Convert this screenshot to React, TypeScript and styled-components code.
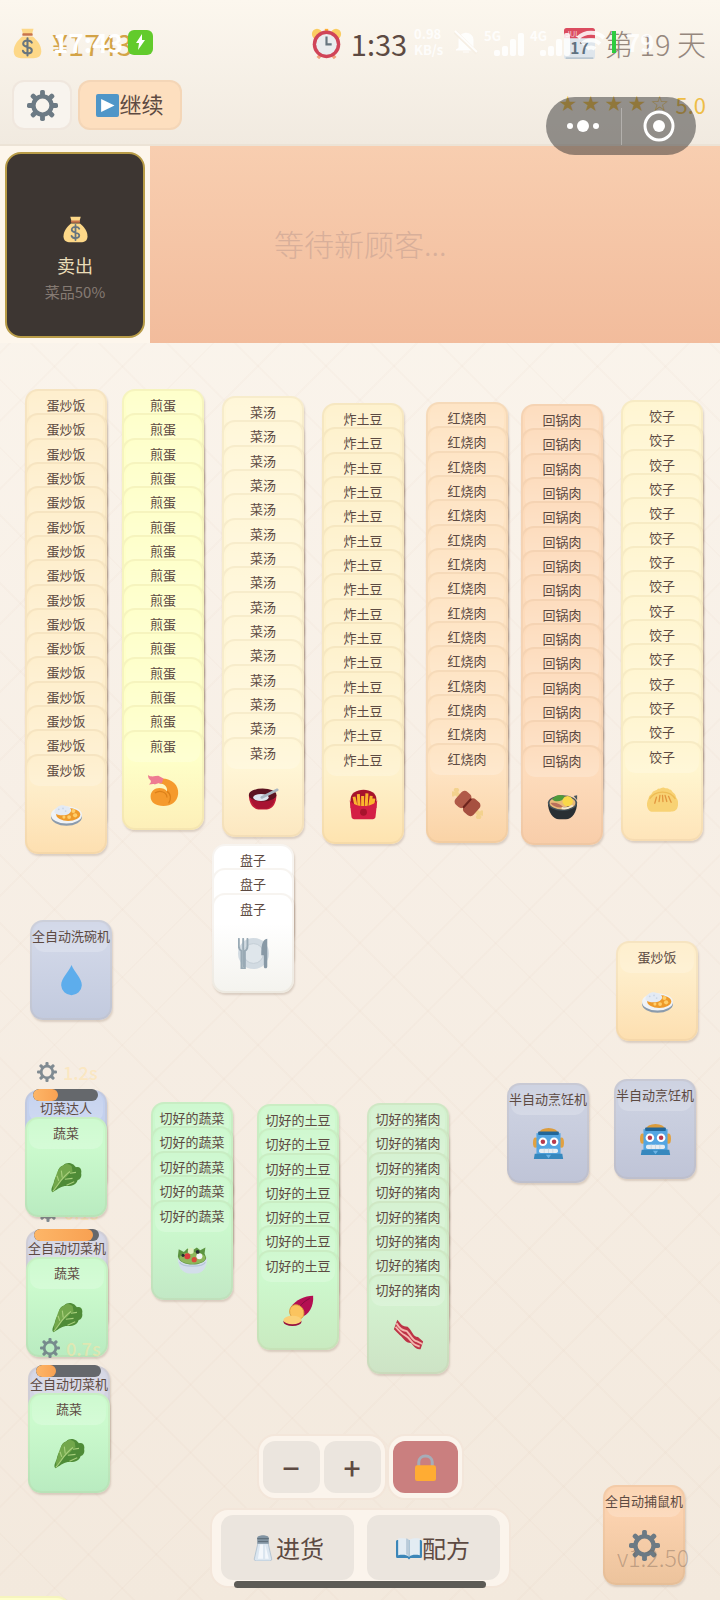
import React from "react";
import styled, { createGlobalStyle } from "styled-components";

const GlobalStyle = createGlobalStyle`
  * { box-sizing: border-box; }
  body {
    margin: 0;
    color: #5d4a42;
    background: #f7efe5;
    font-family: "Noto Sans CJK SC", "Noto Sans", sans-serif;
  }
  button { font-family: inherit; color: inherit; padding: 0; cursor: pointer; }
  ul { list-style: none; margin: 0; padding: 0; }
  svg { display: block; flex: none; }
`;

/* ---------- icons ---------- */

type IconName =
  | "bag" | "clock" | "calendar" | "gear" | "play" | "curry" | "shrimp" | "bowl"
  | "fries" | "meat" | "pan" | "dumpling" | "plate" | "drop" | "leaf" | "salad"
  | "potato" | "bacon" | "robot" | "lock" | "salt" | "book";

const teeth = [0, 45, 90, 135, 180, 225, 270, 315];

const drawings: Record<IconName, React.ReactNode> = {
  bag: (
    <>
      <path d="M11 1h14l-2 7H13z" fill="#fdd888" />
      <path d="M12 10C7 14 2 20 2 27c0 6 4 8 9 8h14c5 0 9-2 9-8 0-7-5-13-10-17z" fill="#fdd888" />
      <rect x="12" y="6" width="12" height="3" rx="1" fill="#c8744a" />
      <path d="M23 17c-1-2-3-2.500-5-2.500-3 0-5 1.500-5 3.800 0 5 10 2.500 10 7.400 0 2.300-2 3.800-5 3.800-2.500 0-4.500-.8-5.300-3M18 12v20" fill="none" stroke="#67757f" strokeWidth="2.400" strokeLinecap="round" />
    </>
  ),
  clock: (
    <>
      <circle cx="7" cy="7" r="6" fill="#fbcd62" />
      <circle cx="29" cy="7" r="6" fill="#fbcd62" />
      <path d="M8 35l4-5M28 35l-4-5" stroke="#f3a27c" strokeWidth="4" />
      <rect x="16" y="1" width="4" height="6" fill="#ffac33" />
      <circle cx="18" cy="19" r="16" fill="#d04458" />
      <circle cx="18" cy="19" r="12" fill="#eaecee" />
      <path d="M18 10v9h6" fill="none" stroke="#67757f" strokeWidth="2.500" />
    </>
  ),
  calendar: (
    <>
      <rect x="0" y="4" width="36" height="32" rx="3" fill="#dfe6ec" />
      <path d="M0 12V3a3 3 0 013-3h30a3 3 0 013 3v9z" fill="#db4c5f" />
      <path d="M2 35h32" stroke="#b9c6d0" strokeWidth="2" />
      <text x="18" y="30" fontSize="18" fontWeight="700" textAnchor="middle" fill="#5f7280">17</text>
      <text x="10" y="10" fontSize="9" textAnchor="middle" fill="#ffffff">JUL</text>
    </>
  ),
  gear: (
    <g fill="#6c7a84">
      {teeth.map((a) => (
        <rect key={a} x="15.200" y="0" width="5.600" height="9" rx="2" transform={`rotate(${a} 18 18)`} />
      ))}
      <path fillRule="evenodd" d="M18 5a13 13 0 100 26 13 13 0 000-26zm0 5a8 8 0 110 16 8 8 0 010-16z" />
    </g>
  ),
  play: (
    <>
      <rect width="36" height="36" rx="3" fill="#4f96c8" />
      <path d="M8 8l21 10L8 28z" fill="#fff" />
    </>
  ),
  curry: (
    <>
      <ellipse cx="18" cy="21" rx="18" ry="10" fill="#8b9bac" />
      <ellipse cx="18" cy="18.500" rx="18" ry="10" fill="#f0f3f6" />
      <ellipse cx="20" cy="18" rx="14" ry="7.500" fill="#ee9a2b" />
      <path d="M4 16C4 9 12 6 17 8c6 1 8 5 5 8-3 4-14 4-18 0z" fill="#e3eaf4" />
      <g fill="#ffce6b"><circle cx="26" cy="14" r="2.300" /><circle cx="28" cy="19" r="2.500" /><circle cx="21" cy="21" r="2.200" /><circle cx="15" cy="21" r="1.800" /></g>
      <g fill="#c8d4e4"><circle cx="9" cy="12" r="1" /><circle cx="14" cy="11" r="1" /><circle cx="17" cy="14" r="1" /></g>
    </>
  ),
  shrimp: (
    <>
      <path d="M16 4c12 0 20 8 19 18-1 9-8 14-17 14S3 32 3 25c0-6 5-10 10-10 4 0 7 1 9 4 1-5-3-9-9-9z" fill="#f59a2d" />
      <path d="M0 0c4 3 8 1 12 1l6 3-2 6c-3-1-6 0-8 1-2-1-4 0-7 0 2-2 3-3 2-5-2-1-3-3-3-6z" fill="#ee7b92" />
      <path d="M8 21c6-4 14-1 14 5M22 19c5 3 5 9 2 14" fill="none" stroke="#dc8019" strokeWidth="1.400" />
    </>
  ),
  bowl: (
    <>
      <path d="M1 15c0 10 5 16 11 17h10c7-1 11-8 11-17z" fill="#c41e3a" />
      <path d="M3 20c2 6 5 9 9 11h10c5-2 8-6 9-11z" fill="#a81332" />
      <ellipse cx="17" cy="15" rx="16" ry="7.500" fill="#5c1320" />
      <ellipse cx="15" cy="18" rx="9" ry="4" fill="#dfe6ee" />
      <path d="M16 18l18-9" stroke="#a9b5c0" strokeWidth="3" strokeLinecap="round" />
    </>
  ),
  fries: (
    <>
      <path d="M3 12C3 5 10 1 18 1s15 4 15 11v10H3z" fill="#a7132c" />
      <path d="M7 9l3 14M12 6l1 17M17 8v14M22 5l-1 17M27 8l-2 14M30 11l-2 12" stroke="#fbb42f" strokeWidth="3.500" />
      <path d="M2 13c5 9 27 9 32 0l-2 19c0 2-2 3-3 3H7c-1 0-3-1-3-3z" fill="#d41f45" />
      <circle cx="18" cy="27" r="4" fill="#a7132c" />
    </>
  ),
  meat: (
    <g transform="rotate(42 18 18)">
      <rect x="-2" y="15.500" width="40" height="5" rx="2" fill="#f3d28e" />
      <g fill="#f3d28e"><circle cx="-2" cy="15" r="3" /><circle cx="-2" cy="21" r="3" /><circle cx="38" cy="15" r="3" /><circle cx="38" cy="21" r="3" /></g>
      <rect x="4" y="8" width="14" height="20" rx="5" fill="#b05a48" />
      <rect x="17" y="8" width="15" height="20" rx="5" fill="#a65040" />
      <path d="M17.500 12v12" stroke="#6d241d" strokeWidth="2.500" strokeLinecap="round" />
    </g>
  ),
  pan: (
    <>
      <path d="M1 14c0 12 6 20 13 20h8c7 0 13-8 13-20z" fill="#292f33" />
      <ellipse cx="18" cy="15" rx="17" ry="9" fill="#46545c" />
      <ellipse cx="18" cy="15" rx="15" ry="7.500" fill="#e9ba79" />
      <path d="M6 11c4-7 13-6 15-3-3 5-10 7-15 3z" fill="#4e9a3b" />
      <circle cx="24" cy="13" r="6" fill="#f9d84a" />
      <path d="M4 15c7-1 11 1 15 5-7 1-12-1-15-5z" fill="#ba705c" />
      <path d="M31 7l4-1v6" fill="#46545c" />
      <path d="M17 21c5 1 10-1 13-3" stroke="#f6ead1" strokeWidth="2.400" />
    </>
  ),
  dumpling: (
    <>
      <path d="M2 14c0-3 3-4 4-6 1-3 5-2 7-5 3 1 4-2 7-1 2 1 4 0 6 2 3 0 3 3 5 4 3 2 2 5 4 7 2 4 1 9 0 11-2 4-6 3-9 4H9c-4 0-6 0-8-4-2-4-1-8 1-12z" fill="#f8d274" />
      <path d="M3 15c3-5 9-8 15-8s12 3 15 8" fill="none" stroke="#eebc55" strokeWidth="1.500" />
      <path d="M9 20l2-7M14 18l1-7M18.500 18l-.5-7M23 18l-2-7M28 19l-3-7" stroke="#e2963e" strokeWidth="1.500" strokeLinecap="round" />
    </>
  ),
  plate: (
    <>
      <circle cx="18" cy="18" r="18" fill="#d2dbe2" />
      <circle cx="18" cy="18" r="11.500" fill="#dfe6eb" stroke="#c0cbd3" />
      <path d="M1 1v9c0 3 1 4 3 5v20h4V15c2-1 3-2 3-5V1M6 1v12" fill="none" stroke="#99aab5" strokeWidth="2.200" strokeLinecap="round" />
      <path d="M5 14h2v20H5z" fill="#99aab5" />
      <path d="M34 1c-6 1-7 8-7 19h3v13c0 3 4 3 4 0z" fill="#8899a6" />
    </>
  ),
  drop: <path d="M18 0c3 8 12 15 12 23.500A12 12 0 0118 35 12 12 0 016 23.500C6 15 15 8 18 0z" fill="#5dadec" />,
  leaf: (
    <>
      <path d="M14 4c4-4 9-3 12-1l3 3c5-1 7 3 6 7 1 4-1 7-4 8-2 7-9 7-13 7-6 0-9 3-16 7-3-1-1-6 1-10 1-5 2-8 5-10-1-5 2-10 6-11z" fill="#4e8b37" />
      <path d="M14 4c4-3 8-2 10 1l1 6c-4 1-5 5-8 7-6 3-9 8-14 14-2-5 2-9 2-14 3-8 4-12 9-14z" fill="#72a74b" />
      <path d="M2 34C8 28 12 18 22 11M9 22l-2-6M13 18l-1-8M18 27l9-4M16 20l9-1M22 13l7-1" fill="none" stroke="#a8cf7c" strokeWidth="1.300" />
    </>
  ),
  salad: (
    <>
      <path d="M1 15c0 12 7 18 13 18h8c7 0 13-6 13-18z" fill="#d3deea" />
      <path d="M1 13l1-8 6 3 4-4 5 3 6-4 4 3 6-3-1 7 2 5c-2 10-31 11-33-2z" fill="#5c9440" />
      <ellipse cx="18" cy="15" rx="15" ry="7" fill="#8eb75b" />
      <circle cx="16" cy="7" r="3.500" fill="#dff0c0" /><circle cx="26" cy="13" r="3.500" fill="#f4f6f8" />
      <circle cx="12" cy="13" r="3.500" fill="#da3e3e" /><circle cx="20" cy="17" r="3" fill="#da4a3b" /><circle cx="24" cy="8" r="2.200" fill="#292f33" /><circle cx="7" cy="12" r="1.800" fill="#292f33" />
      <path d="M3 20c3 6 27 6 30 0" fill="none" stroke="#b6c5d8" strokeWidth="1.500" />
    </>
  ),
  potato: (
    <>
      <path d="M35 1c1 12-5 23-15 25L9 14C15 6 25 1 35 1z" fill="#b40f52" />
      <path d="M31 4C23 8 18 14 16 20" fill="none" stroke="#7e0d3d" />
      <ellipse cx="16" cy="20" rx="8" ry="9" transform="rotate(-35 16 20)" fill="#fbc45f" stroke="#dd9b3c" />
      <ellipse cx="11" cy="31" rx="10.500" ry="5" fill="#96103f" />
      <ellipse cx="11" cy="29" rx="10.500" ry="5" fill="#fbd077" />
    </>
  ),
  bacon: (
    <>
      <path d="M5 1c5 6 6 8 12 8 6 5 6 12 12 12l6 5-3 9c-6 1-8-4-11-7-7 0-9-6-13-9L1 12z" fill="#bd3346" />
      <path d="M4 5c4 7 7 8 12 9 5 5 6 11 12 12l6 3M3 9c5 6 7 8 11 10 6 3 7 9 12 11l5 2" fill="none" stroke="#f4b7af" strokeWidth="2.200" />
    </>
  ),
  robot: (
    <>
      <ellipse cx="18" cy="6" rx="11" ry="6" fill="#dc9c3c" />
      <ellipse cx="3" cy="17" rx="3" ry="6" fill="#e2a140" /><ellipse cx="33" cy="17" rx="3" ry="6" fill="#e2a140" />
      <path d="M4 6h28v27H4z" fill="#55a6e2" />
      <rect x="6" y="4" width="24" height="4" rx="1" fill="#226699" />
      <path d="M2 30h32l1 6H1z" fill="#3688be" />
      <circle cx="11.500" cy="16" r="5" fill="#fff" /><circle cx="24.500" cy="16" r="5" fill="#fff" />
      <circle cx="11.500" cy="16" r="2.600" fill="#b83a4d" /><circle cx="24.500" cy="16" r="2.600" fill="#b83a4d" />
      <rect x="7" y="24" width="22" height="5" rx="2" fill="#e6edf2" />
      <path d="M13 24v5M18 24v5M23 24v5" stroke="#c9d6df" />
      <path d="M15 31h6l-3 4z" fill="#6db4e6" />
    </>
  ),
  lock: (
    <>
      <path d="M9 17v-6c0-11 18-11 18 0v6" fill="none" stroke="#a6adb8" strokeWidth="4" />
      <rect x="4" y="15" width="28" height="21" rx="3" fill="#ffac33" />
    </>
  ),
  salt: (
    <>
      <path d="M11 11h14l5 22c0 2-1 3-3 3H9c-2 0-3-1-3-3z" fill="#dbe6f0" stroke="#a5b9ca" />
      <path d="M14 13l-3 20h7V13zM21 13v20h5z" fill="#f3f7fb" />
      <path d="M10 4c0-5 16-5 16 0v8H10z" fill="#8294a2" />
      <path d="M10 5h16M11 9h14" stroke="#61717d" strokeWidth="1.500" />
    </>
  ),
  book: (
    <>
      <path d="M2 7h32c1 0 2 1 2 2v20c0 2-1 3-2 3H20l-2 2-2-2H2c-1 0-2-1-2-3V9c0-1 1-2 2-2z" fill="#3b86b8" />
      <path d="M3 5c6-1 11-1 15 2 4-3 9-3 15-2v23c-6-1-11-1-15 2-4-3-9-3-15-2z" fill="#e3ecf3" />
      <path d="M18 7v22" stroke="#7ea3bd" strokeWidth="1.500" />
      <path d="M14 5c2 0 3 1 4 2v22c-1-1-2-2-4-2z" fill="#b9cbd9" />
    </>
  ),
};

const Icon = ({ name, size }: { name: IconName; size: number }) => (
  <svg width={size} height={size} viewBox="0 0 36 36" aria-hidden="true">
    {drawings[name]}
  </svg>
);

/* ---------- page ---------- */

const Page = styled.div`
  position: relative;
  display: flex;
  flex-direction: column;
  min-height: 100vh;
  overflow: hidden;
  background:
    repeating-linear-gradient(45deg, transparent 0 46px, rgba(190, 140, 110, 0.03) 46px 48px),
    repeating-linear-gradient(-45deg, transparent 0 46px, rgba(190, 140, 110, 0.03) 46px 48px),
    linear-gradient(#fcf7ef, #f7efe6 50%, #f3e9dd);
`;

const Header = styled.header`
  position: relative;
  display: flex;
  flex-direction: column;
  gap: 12px;
  height: 146px;
  padding: 18px 14px 0 12px;
  background: linear-gradient(#fcf7ee, #f1eae0);
  border-bottom: 2px solid #ece3d6;
`;

const Stats = styled.div`
  display: grid;
  grid-template-columns: 1fr auto 1fr;
  align-items: center;
  height: 50px;
`;

const Stat = styled.div<{ $tone?: string; $end?: boolean }>`
  display: flex;
  align-items: center;
  justify-content: ${(p) => (p.$end ? "flex-end" : "flex-start")};
  gap: 9px;
  font-size: 29px;
  line-height: 32px;
  font-weight: ${(p) => (p.$end ? 300 : 400)};
  color: ${(p) => p.$tone ?? "#5d4a42"};
  white-space: nowrap;
`;

const Toolbar = styled.div`
  display: flex;
  align-items: flex-start;
  gap: 6px;
`;

const ToolButton = styled.button<{ $accent?: boolean }>`
  display: flex;
  align-items: center;
  justify-content: center;
  width: ${(p) => (p.$accent ? 104 : 60)}px;
  height: 50px;
  border: 2px solid rgba(200, 170, 140, 0.16);
  border-radius: 12px;
  background: ${(p) => (p.$accent ? "#fddfbf" : "#f8f4ee")};
  font-size: 22px;
  line-height: 24px;
`;

const ToolLabel = styled.span`
  padding-bottom: 4px;
`;

const Rating = styled.div`
  display: flex;
  align-items: center;
  gap: 6px;
  margin-left: auto;
  padding-top: 12px;
  font-size: 22px;
  line-height: 24px;
  color: #eebd45;
`;

const Star = styled.span`
  width: 17px;
  font-family: "DejaVu Sans", sans-serif;
  font-size: 21px;
  text-align: center;
`;

const Score = styled.span`
  padding-left: 2px;
`;

/* The phone's own status line, drawn over the game header */
const StatusLine = styled.div`
  position: absolute;
  top: 26px;
  left: 53px;
  right: 48px;
  display: flex;
  align-items: center;
  height: 32px;
  color: rgba(255, 255, 255, 0.85);
  font-weight: 700;
`;

const StatusTime = styled.span`
  width: 75px;
  font-size: 26px;
  line-height: 32px;
  color: #ffffff;
`;

const Charging = styled.span`
  display: grid;
  place-items: center;
  width: 25px;
  height: 25px;
  border-radius: 6px;
  background: #62cb2c;
`;

const StatusRight = styled.div`
  display: flex;
  align-items: center;
  gap: 6px;
  margin-left: auto;
  font-size: 13px;
  line-height: 16px;
  white-space: nowrap;
`;

const Speed = styled.span`
  width: 34px;
  white-space: pre-line;
`;

const Signal = styled.span`
  display: flex;
  width: 40px;
  height: 28px;
  align-items: flex-end;
`;

const Network = styled.span`
  align-self: flex-start;
  width: 10px;
`;

const Level = styled.i`
  width: 4px;
  height: 22px;
  background: #2ecc40;
`;

const Percent = styled.span`
  width: 50px;
  padding-left: 4px;
  font-size: 24px;
`;

const Capsule = styled.div`
  position: absolute;
  z-index: 3;
  top: 97px;
  right: 24px;
  display: flex;
  align-items: center;
  width: 150px;
  height: 58px;
  border-radius: 29px;
  background: rgba(50, 50, 50, 0.5);
`;

const CapsuleButton = styled.button`
  display: grid;
  place-items: center;
  flex: 1;
  height: 37px;
  border: 0;
  background: none;
  & + & { border-left: 1px solid rgba(255, 255, 255, 0.3); }
`;

const Service = styled.section`
  display: flex;
  height: 197px;
`;

const SellArea = styled.div`
  width: 150px;
  padding: 6px 5px;
  background: #fdf6ec;
`;

const SellCard = styled.div`
  display: flex;
  flex-direction: column;
  align-items: center;
  height: 186px;
  width: 140px;
  padding-top: 62px;
  border: 2px solid #b89c48;
  border-radius: 16px;
  background: #3d3632;
`;

const SellName = styled.span`
  margin-top: 8px;
  font-size: 18px;
  line-height: 28px;
  color: #e9dcb8;
`;

const SellNote = styled.span`
  font-size: 15px;
  line-height: 26px;
  color: #857a72;
`;

const Customers = styled.div`
  flex: 1;
  display: flex;
  align-items: center;
  padding: 0 0 4px 124px;
  background: linear-gradient(#f8ceb0, #f2bc9c);
  font-size: 30px;
  line-height: 40px;
  font-weight: 300;
  color: #d8af9a;
`;

const Board = styled.main`
  position: relative;
  flex: 1;
  min-height: 1200px;
`;

/* ---------- cards ---------- */

type Tone =
  | "rice" | "egg" | "soup" | "fries" | "braised" | "pork" | "dumpling" | "plate" | "washer"
  | "robot" | "trap" | "green" | "veg" | "spud" | "bacon" | "chef" | "cutter";

const tones: Record<Tone, [string, string]> = {
  rice: ["#feeecb", "#fddfb0"],
  egg: ["#feffc8", "#fdefb8"],
  soup: ["#fff6d6", "#fce7c0"],
  fries: ["#fef1cb", "#fee3af"],
  braised: ["#fee3c2", "#fad3a6"],
  pork: ["#fddbbb", "#f8cda9"],
  dumpling: ["#fff5cf", "#fee4b9"],
  plate: ["#ffffff", "#f4f3ee"],
  washer: ["#d0d6e7", "#c2cade"],
  robot: ["#cbd0e0", "#bfc4d7"],
  trap: ["#fbd2af", "#ecc39c"],
  green: ["#cbfacd", "#b9ebc0"],
  veg: ["#cbf8cd", "#c2e8c5"],
  spud: ["#cdf8cd", "#c9eac0"],
  bacon: ["#d3f1cf", "#cde3c5"],
  chef: ["#c3d0ee", "#c3d0ee"],
  cutter: ["#d3d4e3", "#d3d4e3"],
};

const Pile = styled.ul<{ $x: number; $y: number; $height: number }>`
  position: absolute;
  left: ${(p) => p.$x}px;
  top: ${(p) => p.$y}px;
  display: flex;
  flex-direction: column;
  width: 82px;
  height: ${(p) => p.$height}px;
`;

const Slot = styled.li`
  flex: 1 1 0;
  min-height: 0;
`;

const Card = styled.div<{ $tone: Tone; $machine?: boolean }>`
  position: relative;
  display: flex;
  flex-direction: column;
  align-items: center;
  gap: 19px;
  height: 100px;
  padding-top: ${(p) => (p.$machine ? 6 : 4)}px;
  border: 2px solid rgba(180, 150, 110, 0.1);
  border-radius: 13px;
  background: linear-gradient(${(p) => tones[p.$tone][0]} 30%, ${(p) => tones[p.$tone][1]}) border-box;
  box-shadow: 1px 2px 2px rgba(110, 80, 60, 0.2);

  &::before {
    content: "";
    position: absolute;
    top: 0;
    left: 2px;
    right: 2px;
    height: 30px;
    border-radius: 10px;
    background: linear-gradient(rgba(255, 255, 255, 0.05), rgba(255, 255, 255, 0.2));
  }
`;

const CardName = styled.span`
  position: relative;
  font-size: 13px;
  line-height: 20px;
  white-space: nowrap;
`;

const Timer = styled.li`
  position: absolute;
  top: -28px;
  left: 12px;
  display: flex;
  align-items: center;
  gap: 6px;
  height: 20px;
  font-size: 18px;
  font-weight: 500;
  color: rgba(255, 226, 165, 0.55);
  svg { opacity: 0.85; }
`;

const Progress = styled.li`
  position: absolute;
  top: -1px;
  left: 8px;
  width: 65px;
  height: 12px;
  border-radius: 6px;
  background: #65686c;
  overflow: hidden;
`;

const ProgressFill = styled.div`
  height: 100%;
  border-radius: 6px;
  background: linear-gradient(90deg, #fdb668, #f8a152);
`;

interface PileData {
  name: string;
  icon: IconName;
  tone: Tone;
  count: number;
  x: number;
  y: number;
}

const piles: PileData[] = [
  { name: "蛋炒饭", icon: "curry", tone: "rice", count: 16, x: 25, y: 46 },
  { name: "煎蛋", icon: "shrimp", tone: "egg", count: 15, x: 122, y: 46 },
  { name: "菜汤", icon: "bowl", tone: "soup", count: 15, x: 222, y: 53 },
  { name: "炸土豆", icon: "fries", tone: "fries", count: 15, x: 322, y: 60 },
  { name: "红烧肉", icon: "meat", tone: "braised", count: 15, x: 426, y: 59 },
  { name: "回锅肉", icon: "pan", tone: "pork", count: 15, x: 521, y: 61 },
  { name: "饺子", icon: "dumpling", tone: "dumpling", count: 15, x: 621, y: 57 },
  { name: "盘子", icon: "plate", tone: "plate", count: 3, x: 212, y: 501 },
  { name: "全自动洗碗机", icon: "drop", tone: "washer", count: 1, x: 30, y: 577 },
  { name: "蛋炒饭", icon: "curry", tone: "rice", count: 1, x: 616, y: 598 },
  { name: "半自动烹饪机", icon: "robot", tone: "robot", count: 1, x: 507, y: 740 },
  { name: "半自动烹饪机", icon: "robot", tone: "robot", count: 1, x: 614, y: 736 },
  { name: "切好的蔬菜", icon: "salad", tone: "veg", count: 5, x: 151, y: 759 },
  { name: "切好的土豆", icon: "potato", tone: "spud", count: 7, x: 257, y: 761 },
  { name: "切好的猪肉", icon: "bacon", tone: "bacon", count: 8, x: 367, y: 760 },
  { name: "全自动捕鼠机", icon: "gear", tone: "trap", count: 1, x: 603, y: 1142 },
  { name: "", icon: "shrimp", tone: "egg", count: 1, x: -12, y: 1253 },
];

const machines = [
  { name: "全自动切菜机", tone: "cutter" as Tone, left: "0.1s", done: 90, x: 26, y: 887 },
  { name: "切菜达人", tone: "chef" as Tone, left: "1.2s", done: 39, x: 25, y: 747 },
  { name: "全自动切菜机", tone: "cutter" as Tone, left: "0.7s", done: 31, x: 28, y: 1023 },
];

const visibleStrip = 73 / 3;

const CardPile = ({ name, icon, tone, count, x, y }: PileData) => (
  <Pile $x={x} $y={y} $height={Math.round(count * visibleStrip)}>
    {Array.from({ length: count }, (_, i) => (
      <Slot key={i}>
        <Card $tone={tone}>
          <CardName>{name}</CardName>
          {i === count - 1 && <Icon name={icon} size={31} />}
        </Card>
      </Slot>
    ))}
  </Pile>
);

/* ---------- bottom controls ---------- */

const Controls = styled.nav`
  position: absolute;
  z-index: 2;
  left: 0;
  right: 0;
  bottom: 12px;
  display: flex;
  flex-direction: column;
  align-items: center;
  gap: 8px;
  pointer-events: none;
`;

const ControlRow = styled.div`
  display: flex;
`;

const Group = styled.div<{ $wide?: boolean }>`
  display: flex;
  gap: ${(p) => (p.$wide ? 13 : 4)}px;
  padding: ${(p) => (p.$wide ? "5px 9px 6px" : "5px 4px")};
  border: 2px solid #f3e6da;
  border-radius: 18px;
  background: #fbf4ec;
  pointer-events: auto;
`;

const ControlButton = styled.button<{ $kind: "zoom" | "lock" | "menu" }>`
  display: flex;
  align-items: center;
  justify-content: center;
  width: ${(p) => ({ zoom: 57, lock: 65, menu: 133 })[p.$kind]}px;
  height: ${(p) => (p.$kind === "menu" ? 65 : 52)}px;
  border: 0;
  border-radius: 12px;
  background: ${(p) => (p.$kind === "lock" ? "#ca7f7f" : "#ebe5de")};
  font-size: ${(p) => (p.$kind === "menu" ? 24 : 30)}px;
  line-height: 32px;
  font-weight: ${(p) => (p.$kind === "menu" ? 400 : 500)};
`;

const HomeBar = styled.div`
  position: absolute;
  z-index: 3;
  bottom: 12px;
  left: 0;
  right: 0;
  width: 35%;
  height: 7px;
  margin: 0 auto;
  border-radius: 4px;
  background: #5d5b56;
`;

const Version = styled.span`
  position: absolute;
  z-index: 2;
  right: 31px;
  bottom: 28px;
  font-size: 23px;
  line-height: 30px;
  font-weight: 300;
  color: rgba(120, 100, 85, 0.42);
`;

const SignalBars = () => (
  <svg width="30" height="24" viewBox="0 0 30 24" fill="currentColor" aria-hidden="true">
    <rect x="0" y="18" width="6" height="6" rx="2" />
    <rect x="8" y="14" width="6" height="10" rx="2" />
    <rect x="16" y="7" width="6" height="17" rx="2" />
    <rect x="24" y="1" width="6" height="23" rx="2" />
  </svg>
);

const App = () => (
  <>
    <GlobalStyle />
    <Page>
      <Header>
        <Stats>
          <Stat $tone="#d3a347">
            <Icon name="bag" size={31} />¥1743
          </Stat>
          <Stat>
            <Icon name="clock" size={31} />1:33
          </Stat>
          <Stat $tone="#95877d" $end>
            <Icon name="calendar" size={31} />第 19 天
          </Stat>
        </Stats>
        <Toolbar>
          <ToolButton aria-label="设置">
            <Icon name="gear" size={31} />
          </ToolButton>
          <ToolButton $accent>
            <Icon name="play" size={23} />
            <ToolLabel>继续</ToolLabel>
          </ToolButton>
          <Rating>
            {["★", "★", "★", "★", "☆"].map((s, i) => (
              <Star key={i}>{s}</Star>
            ))}
            <Score>5.0</Score>
          </Rating>
        </Toolbar>
        <StatusLine>
          <StatusTime>17:43</StatusTime>
          <Charging>
            <svg width="11" height="16" viewBox="0 0 11 16" aria-hidden="true">
              <path d="M7 0L1 9h3l-1 7 7-10H7z" fill="#fff" />
            </svg>
          </Charging>
          <StatusRight>
            <Speed>{"0.98\nKB/s"}</Speed>
            <svg width="24" height="26" viewBox="0 0 24 26" aria-hidden="true">
              <path d="M5 19V11c0-9 14-9 14 0v8l3 2H2zM9 23h6" fill="currentColor" stroke="currentColor" />
              <path d="M1 3l22 21" stroke="#f6efe4" strokeWidth="4" />
              <path d="M1 2l22 21" stroke="currentColor" strokeWidth="2" />
            </svg>
            <Signal>
              <Network>5G</Network>
              <SignalBars />
            </Signal>
            <Signal>
              <Network>4G</Network>
              <SignalBars />
            </Signal>
            <svg width="30" height="24" viewBox="0 0 30 24" aria-hidden="true">
              <path d="M2 8c7-7 19-7 26 0M6 14c5-5 13-5 18 0M11 19c2-2 6-2 8 0" fill="none" stroke="currentColor" strokeWidth="4" />
            </svg>
            <Level />
            <Percent>79</Percent>
          </StatusRight>
        </StatusLine>
      </Header>

      <Capsule>
        <CapsuleButton aria-label="更多">
          <svg width="32" height="12" viewBox="0 0 32 12" fill="#fff" aria-hidden="true">
            <circle cx="3" cy="6" r="3" /><circle cx="16" cy="6" r="6" /><circle cx="29" cy="6" r="3" />
          </svg>
        </CapsuleButton>
        <CapsuleButton aria-label="关闭">
          <svg width="32" height="32" viewBox="0 0 32 32" aria-hidden="true">
            <circle cx="16" cy="16" r="14" fill="none" stroke="#fff" strokeWidth="3" />
            <circle cx="16" cy="16" r="6" fill="#fff" />
          </svg>
        </CapsuleButton>
      </Capsule>

      <Service>
        <SellArea>
          <SellCard>
            <Icon name="bag" size={27} />
            <SellName>卖出</SellName>
            <SellNote>菜品50%</SellNote>
          </SellCard>
        </SellArea>
        <Customers>等待新顾客...</Customers>
      </Service>

      <Board>
        {piles.map((p) => (
          <CardPile key={`${p.name}-${p.x}`} {...p} />
        ))}
        {machines.map((m) => (
          <Pile key={m.y} $x={m.x} $y={m.y} $height={54}>
            <Slot>
              <Card $tone={m.tone} $machine>
                <CardName>{m.name}</CardName>
              </Card>
            </Slot>
            <Slot>
              <Card $tone="green">
                <CardName>蔬菜</CardName>
                <Icon name="leaf" size={31} />
              </Card>
            </Slot>
            <Timer>
              <Icon name="gear" size={20} />
              {m.left}
            </Timer>
            <Progress>
              <ProgressFill style={{ width: `${m.done}%` }} />
            </Progress>
          </Pile>
        ))}
      </Board>

      <Controls>
        <ControlRow>
          <Group>
            <ControlButton $kind="zoom" aria-label="缩小">−</ControlButton>
            <ControlButton $kind="zoom" aria-label="放大">+</ControlButton>
          </Group>
          <Group>
            <ControlButton $kind="lock" aria-label="锁定">
              <Icon name="lock" size={27} />
            </ControlButton>
          </Group>
        </ControlRow>
        <Group $wide>
          <ControlButton $kind="menu">
            <Icon name="salt" size={26} />进货
          </ControlButton>
          <ControlButton $kind="menu">
            <Icon name="book" size={26} />配方
          </ControlButton>
        </Group>
      </Controls>
      <Version>v1.2.50</Version>
      <HomeBar />
    </Page>
  </>
);

export default App;
